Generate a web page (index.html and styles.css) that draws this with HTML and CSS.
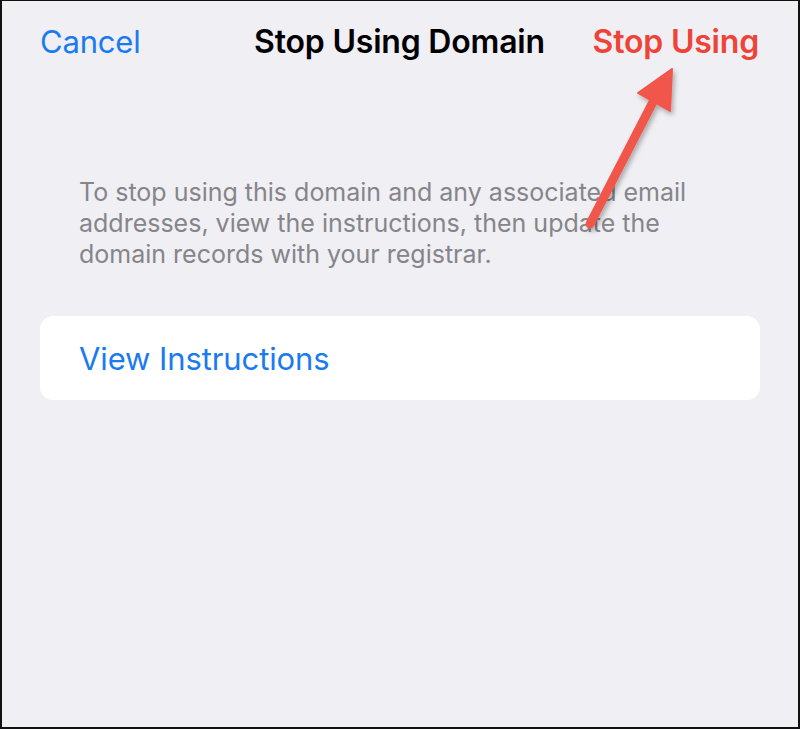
FILE: index.html
```html
<!DOCTYPE html>
<html>
<head>
<meta charset="utf-8">
<link rel="stylesheet" href="styles.css">
</head>
<body>
<div class="frame">
  <header class="nav">
    <span class="nav-btn cancel">Cancel</span>
    <span class="nav-title">Stop Using Domain</span>
    <span class="nav-btn stop">Stop Using</span>
  </header>
  <p class="desc">To stop using this domain and any associated email addresses, view the instructions, then update the domain records with your registrar.</p>
  <div class="card">
    <span class="card-link">View Instructions</span>
  </div>
  <svg class="arrow" width="800" height="300" viewBox="0 0 800 300">
    <defs>
      <filter id="sh" x="-50%" y="-50%" width="200%" height="200%">
        <feDropShadow dx="2" dy="3" stdDeviation="2.5" flood-color="#000" flood-opacity="0.3"/>
      </filter>
    </defs>
    <g filter="url(#sh)">
      <line x1="590" y1="224" x2="655" y2="98" stroke="#f0564a" stroke-width="9" stroke-linecap="round"/>
      <polygon points="672,69 638,93 670,111" fill="#f0564a" stroke="#f0564a" stroke-width="2" stroke-linejoin="round"/>
    </g>
  </svg>
</div>
</body>
</html>
```
FILE: styles.css
```css
* { box-sizing: border-box; }
html, body { margin: 0; padding: 0; }
body {
  width: 800px;
  height: 729px;
  background: #000;
  font-family: Inter, "Noto Sans", sans-serif;
}
.frame {
  position: relative;
  width: 800px;
  height: 729px;
  background: #f0eff4;
  border-left: 2px solid #111;
  border-top: 1px solid #111;
  border-right: 2px solid #111;
  border-bottom: 2px solid #111;
  overflow: hidden;
}
.nav {
  display: grid;
  grid-template-columns: 1fr auto 1fr;
  align-items: center;
  height: 81px;
  padding: 0 39px 0 38px;
}
.nav-btn {
  font-size: 31px;
  letter-spacing: -0.2px;
}
.cancel { color: #1a7bf0; justify-self: start; }
.stop { color: #ef4338; font-weight: 600; font-size: 32px; justify-self: end; }
.nav-title {
  font-size: 32px;
  font-weight: 600;
  color: #000;
  letter-spacing: -0.2px;
}
.desc {
  margin: 95px 0 0;
  padding: 0 60px 0 77px;
  font-size: 25px;
  line-height: 31px;
  color: #85858a;
  letter-spacing: 0;
}
.card {
  margin: 46px 38px 0 38px;
  height: 84px;
  background: #fff;
  border-radius: 13px;
  display: flex;
  align-items: center;
  padding: 0 39px;
}
.card-link {
  font-size: 31px;
  color: #1a7bf0;
  letter-spacing: -0.1px;
}
.arrow {
  position: absolute;
  left: -2px;
  top: -1px;
}
```
